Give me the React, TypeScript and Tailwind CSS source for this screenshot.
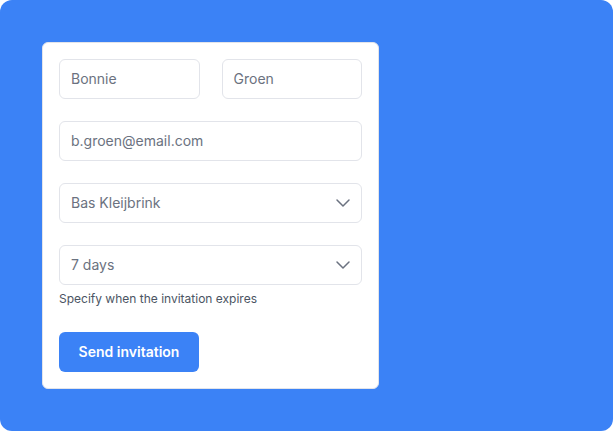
import React from 'react';
import { ChevronDown } from 'lucide-react';

const TextField: React.FC<{ value: string }> = ({ value }) => (
    <div className="flex h-10 items-center rounded-md border border-[#e2e4ea] bg-white px-[11px] text-sm text-[#6b7280]">
        {value}
    </div>
);

const SelectField: React.FC<{ value: string }> = ({ value }) => (
    <div className="flex h-10 items-center justify-between rounded-md border border-[#e2e4ea] bg-white pl-[11px] pr-[6px] text-sm text-[#6b7280]">
        <span>{value}</span>
        <ChevronDown size={24} strokeWidth={1.5} className="text-[#6b7280]" />
    </div>
);

const App: React.FC = () => {
    return (
        <div className="bg-white" style={{ fontFamily: 'Inter, "Noto Sans", sans-serif' }}>
            <div className="h-[431px] w-[613px] rounded-xl bg-[#3b82f6] pl-[42px] pt-[42px]">
                <div className="flex w-[337px] flex-col rounded-md border border-[#e2e4ea] bg-white p-4">
                    <div className="flex flex-col gap-[22px]">
                        {/* Name row */}
                        <div className="grid grid-cols-2 gap-[22px]">
                            <TextField value="Bonnie" />
                            <TextField value="Groen" />
                        </div>

                        <TextField value="b.groen@email.com" />

                        <SelectField value="Bas Kleijbrink" />

                        <div>
                            <SelectField value="7 days" />
                            <p className="mt-1.5 text-xs text-[#4b5563]">Specify when the invitation expires</p>
                        </div>
                    </div>

                    <button className="mt-[25px] flex h-10 w-[140px] items-center justify-center rounded-md bg-[#3b82f6] text-sm font-semibold text-white">
                        Send invitation
                    </button>
                </div>
            </div>
        </div>
    );
};

export default App;
